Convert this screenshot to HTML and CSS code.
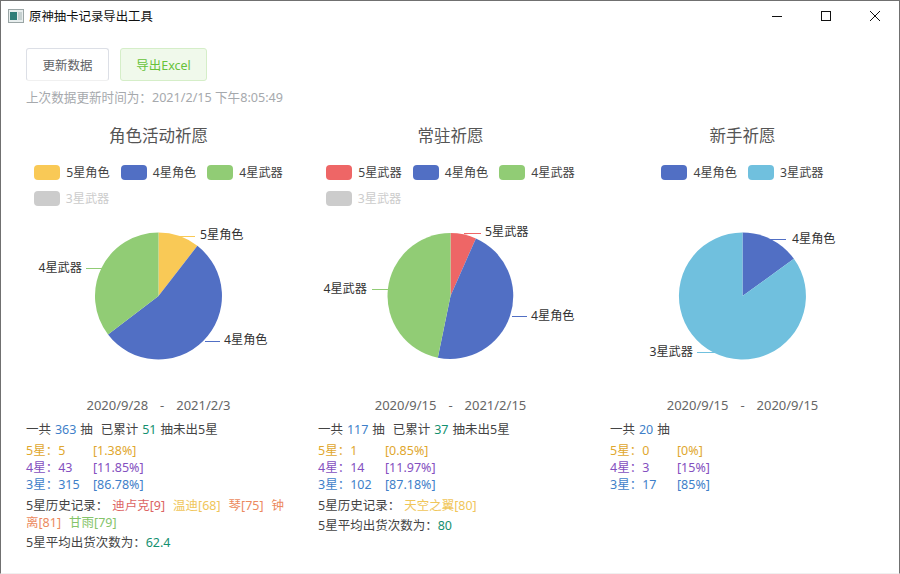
FILE: index.html
```html
<!DOCTYPE html>
<html lang="zh-CN">
  <head>
    <meta charset="UTF-8" />
    <title>原神抽卡记录导出工具</title>
    <link rel="stylesheet" href="styles.css">
  </head>
  <body>
    <div class="window">
      <div class="titlebar">
        <svg class="app-icon" width="16" height="14" viewBox="0 0 16 14">
          <rect x="0.5" y="0.5" width="15" height="13" fill="#e8eeee" stroke="#9aa5a5" />
          <rect x="2" y="3" width="7" height="8" fill="#2f7d78" />
          <rect x="10" y="3" width="4" height="8" fill="#c5d0d0" />
        </svg>
        <span class="app-title">原神抽卡记录导出工具</span>
        <div class="win-controls">
          <svg width="14" height="14" viewBox="0 0 14 14"><path d="M2 7.5h10" stroke="#111" fill="none" /></svg>
          <svg width="14" height="14" viewBox="0 0 14 14"><rect x="2.5" y="2.5" width="9" height="9" stroke="#111" fill="none" /></svg>
          <svg width="14" height="14" viewBox="0 0 14 14"><path d="M2 2l10 10M12 2L2 12" stroke="#111" fill="none" /></svg>
        </div>
      </div>

      <div class="content">
        <div class="toolbar">
          <button class="btn">更新数据</button>
          <button class="btn btn-success">导出Excel</button>
        </div>
        <p class="update-time">上次数据更新时间为：2021/2/15 下午8:05:49</p>

        <div class="columns">
          <section class="column">
            <h2 class="chart-title">角色活动祈愿</h2>
            <div class="legend">
              <span class="legend-item"><i class="swatch yellow"></i>5星角色</span>
              <span class="legend-item"><i class="swatch blue"></i>4星角色</span>
              <span class="legend-item"><i class="swatch green"></i>4星武器</span>
              <span class="legend-item off"><i class="swatch grey"></i>3星武器</span>
            </div>
            <svg class="pie" width="265" height="170" viewBox="0 0 265 170">
              <path d="M132.5 80L132.5 16.5A63.5 63.5 0 0 1 171.4 29.8Z" fill="#f9c956" />
              <path d="M132.5 80L171.4 29.8A63.5 63.5 0 1 1 82 118.5Z" fill="#516fc4" />
              <path d="M132.5 80L82 118.5A63.5 63.5 0 0 1 132.5 16.5Z" fill="#91cc75" />
              <path d="M153 20.5H169" stroke="#f9c956" fill="none" />
              <path d="M179 125.5H194" stroke="#516fc4" fill="none" />
              <path d="M60 52.5H76" stroke="#91cc75" fill="none" />
              <text x="174" y="23">5星角色</text>
              <text x="198" y="128">4星角色</text>
              <text x="56" y="56" text-anchor="end">4星武器</text>
            </svg>
            <p class="date-range">2020/9/28 &nbsp; - &nbsp; 2021/2/3</p>
            <p class="line">一共 <span class="c-blue">363</span> 抽 &nbsp;已累计 <span class="c-teal">51</span> 抽未出5星</p>
            <div class="rates">
              <div class="rate c-gold"><span class="rate-name">5星：5</span><span>[1.38%]</span></div>
              <div class="rate c-purple"><span class="rate-name">4星：43</span><span>[11.85%]</span></div>
              <div class="rate c-blue"><span class="rate-name">3星：315</span><span>[86.78%]</span></div>
            </div>
            <p class="line history"><span class="history-label">5星历史记录：</span><span class="hero c-red">迪卢克[9]</span><span class="hero c-yellow">温迪[68]</span><span class="hero c-orange">琴[75]</span><span class="c-orange">钟</span><span class="hero c-orange">离[81]</span><span class="hero c-green">甘雨[79]</span></p>
            <p class="line average">5星平均出货次数为：<span class="c-teal">62.4</span></p>
          </section>

          <section class="column">
            <h2 class="chart-title">常驻祈愿</h2>
            <div class="legend">
              <span class="legend-item"><i class="swatch red"></i>5星武器</span>
              <span class="legend-item"><i class="swatch blue"></i>4星角色</span>
              <span class="legend-item"><i class="swatch green"></i>4星武器</span>
              <span class="legend-item off"><i class="swatch grey"></i>3星武器</span>
            </div>
            <svg class="pie" width="265" height="170" viewBox="0 0 265 170">
              <path d="M132.5 80L132.5 17A63 63 0 0 1 157.9 22.4Z" fill="#ee6666" />
              <path d="M132.5 80L157.9 22.4A63 63 0 0 1 119.8 141.7Z" fill="#516fc4" />
              <path d="M132.5 80L119.8 141.7A63 63 0 0 1 132.5 17Z" fill="#91cc75" />
              <path d="M146 17.5H163" stroke="#ee6666" fill="none" />
              <path d="M194 100.5H209" stroke="#516fc4" fill="none" />
              <path d="M54 73.5H70" stroke="#91cc75" fill="none" />
              <text x="167" y="20">5星武器</text>
              <text x="213" y="104">4星角色</text>
              <text x="49" y="77" text-anchor="end">4星武器</text>
            </svg>
            <p class="date-range">2020/9/15 &nbsp; - &nbsp; 2021/2/15</p>
            <p class="line">一共 <span class="c-blue">117</span> 抽 &nbsp;已累计 <span class="c-teal">37</span> 抽未出5星</p>
            <div class="rates">
              <div class="rate c-gold"><span class="rate-name">5星：1</span><span>[0.85%]</span></div>
              <div class="rate c-purple"><span class="rate-name">4星：14</span><span>[11.97%]</span></div>
              <div class="rate c-blue"><span class="rate-name">3星：102</span><span>[87.18%]</span></div>
            </div>
            <p class="line history"><span class="history-label">5星历史记录：</span><span class="hero c-yellow">天空之翼[80]</span></p>
            <p class="line average">5星平均出货次数为：<span class="c-teal">80</span></p>
          </section>

          <section class="column">
            <h2 class="chart-title">新手祈愿</h2>
            <div class="legend">
              <span class="legend-item"><i class="swatch blue"></i>4星角色</span>
              <span class="legend-item"><i class="swatch sky"></i>3星武器</span>
            </div>
            <svg class="pie" width="265" height="170" viewBox="0 0 265 170">
              <path d="M132.5 80L132.5 16.5A63.5 63.5 0 0 1 183.9 42.8Z" fill="#516fc4" />
              <path d="M132.5 80L183.9 42.8A63.5 63.5 0 1 1 132.5 16.5Z" fill="#70c0de" />
              <path d="M157 23.5H176" stroke="#516fc4" fill="none" />
              <path d="M87 136.5H106" stroke="#70c0de" fill="none" />
              <text x="182" y="27">4星角色</text>
              <text x="83" y="140" text-anchor="end">3星武器</text>
            </svg>
            <p class="date-range">2020/9/15 &nbsp; - &nbsp; 2020/9/15</p>
            <p class="line">一共 <span class="c-blue">20</span> 抽</p>
            <div class="rates">
              <div class="rate c-gold"><span class="rate-name">5星：0</span><span>[0%]</span></div>
              <div class="rate c-purple"><span class="rate-name">4星：3</span><span>[15%]</span></div>
              <div class="rate c-blue"><span class="rate-name">3星：17</span><span>[85%]</span></div>
            </div>
          </section>
        </div>
      </div>
    </div>
  </body>
</html>
```

FILE: styles.css
```css
* {
  box-sizing: border-box;
}

html,
body {
  margin: 0;
  padding: 0;
}

body {
  font-family: "Noto Sans", "Noto Sans CJK SC", sans-serif;
  color: #444;
  background: #fff;
}

.window {
  width: 900px;
  height: 574px;
  overflow: hidden;
  border: 1px solid #707070;
  border-bottom-color: #f0f0f0;
}

.titlebar {
  display: flex;
  align-items: center;
  height: 30px;
  padding-left: 7px;
  font-size: 12.4px;
  color: #111;
}

.app-icon {
  margin-right: 5px;
}

.win-controls {
  display: flex;
  gap: 35px;
  margin-left: auto;
  padding-right: 17px;
}

.content {
  padding: 17px 25px 0 25px;
}

.toolbar {
  display: flex;
  gap: 11px;
}

.btn {
  width: 83px;
  height: 33px;
  padding: 0;
  border: 1px solid #dcdfe6;
  border-bottom-color: #f0f0f0;
  border-radius: 3px;
  background: #fff;
  color: #606266;
  font-family: inherit;
  font-size: 12.5px;
}

.btn-success {
  width: 87px;
  border-color: #d5eec8;
  background: #f0f9eb;
  color: #67c23a;
}

.update-time {
  margin: 8px 0 0;
  font-size: 12.6px;
  line-height: 18px;
  color: #a6a9ad;
}

.columns {
  display: grid;
  grid-template-columns: 265px 265px 265px;
  column-gap: 27px;
}

.chart-title {
  margin: 18px 0 0;
  font-size: 16.5px;
  font-weight: 400;
  line-height: 22px;
  text-align: center;
  color: #555;
}

.legend {
  display: flex;
  flex-wrap: wrap;
  align-content: flex-start;
  justify-content: center;
  gap: 7px 11px;
  height: 53px;
  margin-top: 16px;
  font-size: 12.2px;
  line-height: 19px;
}

.legend-item {
  display: flex;
  align-items: center;
  gap: 6px;
  height: 19px;
}

.legend-item.off {
  color: #ccc;
  margin-right: 174px;
}

.swatch {
  width: 26px;
  height: 15px;
  border-radius: 4px;
}

.yellow { background: #f9c956; }
.blue { background: #516fc4; }
.green { background: #91cc75; }
.red { background: #ee6666; }
.sky { background: #70c0de; }
.grey { background: #ccc; }

.pie {
  display: block;
}

.pie text {
  font-size: 12.2px;
  fill: #333;
}

.date-range {
  margin: 10px 0 0;
  font-size: 13px;
  line-height: 18px;
  word-spacing: 0.6px;
  text-align: center;
  color: #666;
}

.line {
  margin: 7px 0 0;
  font-size: 12.5px;
  line-height: 17px;
  word-spacing: 0.7px;
}

.rates {
  margin-top: 4px;
  font-size: 12.5px;
  line-height: 17px;
}

.rate {
  display: flex;
}

.rate-name {
  width: 67px;
}

.history {
  margin-top: 4px;
}

.history-label {
  margin-right: 4px;
}

.hero {
  margin-right: 8px;
}

.average {
  margin-top: 3px;
}

.c-blue { color: #3f7fc9; }
.c-teal { color: #14906f; }
.c-gold { color: #dfa72e; }
.c-purple { color: #8450c0; }
.c-red { color: #dc6464; }
.c-yellow { color: #f0c65a; }
.c-orange { color: #ec8a5e; }
.c-green { color: #85c46a; }
```
